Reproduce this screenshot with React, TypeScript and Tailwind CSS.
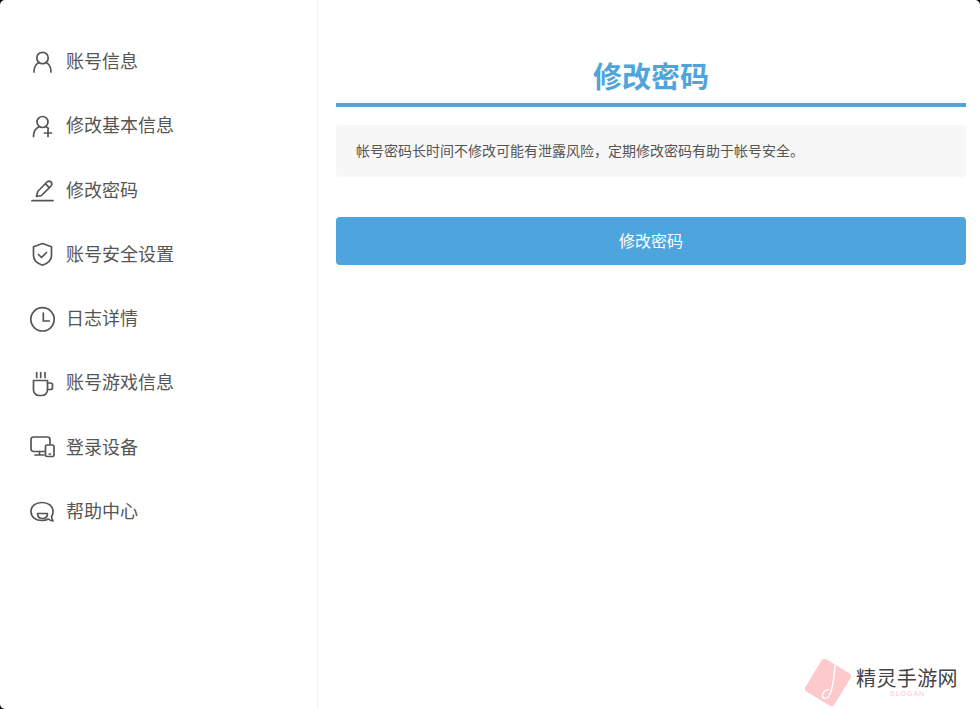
import React from "react";

function Ic({ children }: { children: React.ReactNode }) {
  return (
    <svg width="28" height="28" viewBox="0 0 28 28" fill="none" stroke="#555" strokeWidth="1.7" strokeLinecap="round" strokeLinejoin="round">
      {children}
    </svg>
  );
}

const items: [string, React.ReactNode][] = [
  ["账号信息", <Ic><circle cx="14.500" cy="11" r="5.700" /><path d="M6 25c0-5 2.500-8.500 5.200-9.500M23 25c0-5-2.500-8.500-5.200-9.500" /></Ic>],
  ["修改基本信息", <Ic><circle cx="14.500" cy="10" r="5.500" /><path d="M5.500 24.500c0-5 2.500-8.500 5.500-9.800M18 14.700c1 .4 1.800 1 2.500 1.800" /><path d="M20 17.500v7M16.500 21h7" /></Ic>],
  ["修改密码", <Ic><path d="M4 24.700h21" /><path d="M8.500 20.500l1.200-5L19 6c1-1 2.800-1 4 0s1 2.800 0 4L13.500 19.500z" /><path d="M17.500 7.800l3.800 3.800" /></Ic>],
  ["账号安全设置", <Ic><path d="M14.500 3.500l9 3.200v9c0 4.500-3.500 7.500-9 9.500-5.500-2-9-5-9-9.500v-9z" /><path d="M10.500 14.500l3 3 5-5" /></Ic>],
  ["日志详情", <Ic><circle cx="14.500" cy="14.300" r="11.700" /><path d="M15.300 8v8h6" /></Ic>],
  ["账号游戏信息", <Ic><path d="M5.500 11.500h14v9.500a5.500 5.500 0 0 1-5.500 5.500h-3a5.500 5.500 0 0 1-5.500-5.500z" /><path d="M19.500 14h3a2 2 0 0 1 2 2v2.500a2 2 0 0 1-2 2h-3" /><path d="M8.700 3.500v5M12.700 3.500v5M17 3.500v5" /></Ic>],
  ["登录设备", <Ic><path d="M17 18.500H5.500A2.500 2.500 0 0 1 3 16V6.500A2.500 2.500 0 0 1 5.500 4H19.500A2.500 2.500 0 0 1 22 6.500V11" /><path d="M7 22h9M11.500 18.500V22" /><rect x="17.500" y="12" width="8.500" height="11.500" rx="1.500" /><path d="M21.200 21h1.200" /></Ic>],
  ["帮助中心", <Ic><path d="M14 4.500c6.500 0 11 3.500 11 9 0 2-.5 3.800-1.500 5 .2 1.500.8 3 1.500 4.500-2-.2-3.500-1-4.500-2-2 1-4 1.500-6.500 1.500C7.500 22.500 3 19 3 13.500S7.500 4.500 14 4.500z" /><path d="M9.500 15.500h10c0 3.500-2 5-5 5s-5-1.500-5-5z" /></Ic>],
];

export default function App() {
  return (
    <div className="w-[980px] h-[709px] bg-black overflow-hidden">
      <div className="relative w-[980px] h-[709px] bg-white overflow-hidden flex rounded-tl-[5px] rounded-tr-[5px] rounded-bl-[5px] text-[#555] font-['Liberation_Sans','Noto_Sans_CJK_SC',sans-serif]">
        <aside className="w-[318px] shrink-0 border-r border-[#f2f2f2] pt-[29.3px]">
          {items.map(([label, icon]) => (
            <div key={label} className="h-[64.3px] flex items-center pl-[28px] gap-[10px] text-[18px]">
              {icon}
              <span className="mt-[2px]">{label}</span>
            </div>
          ))}
        </aside>
        <main className="flex-1 pl-[18px] pr-[14px]">
          <h1 className="h-[107px] pt-[56px] border-b-[4px] border-[#4ea4dd] text-center text-[29px] leading-[45px] font-bold text-[#4ea4dd]">修改密码</h1>
          <p className="mt-[18px] h-[52px] bg-[#f7f7f7] rounded-[4px] pl-[20px] text-[14px] leading-[52px] text-[#555]">帐号密码长时间不修改可能有泄露风险，定期修改密码有助于帐号安全。</p>
          <button className="mt-[40px] w-full h-[48px] bg-[#4ea4dd] rounded-[4px] text-white text-[16px] pt-[2px]">修改密码</button>
        </main>
        <div className="absolute left-[804px] top-[658px] w-[170px] h-[50px]">
          <svg className="absolute left-0 top-0" width="50" height="50" viewBox="0 0 50 50">
            <rect x="7" y="5.500" width="34" height="38" rx="4" fill="#fdc9cb" transform="rotate(31 24 24.500)" />
            <path d="M31 7c-1 10-1 22-6 31-2 4-7 3-6.500-1 .5-3 3-5 6.500-5.500" fill="none" stroke="#fff" strokeWidth="1.500" />
          </svg>
          <span className="absolute left-[52px] top-[10px] text-[20px] leading-[22px] tracking-[0.4px] text-[#444] whitespace-nowrap">精灵手游网</span>
          <span className="absolute left-[86px] top-[32px] text-[7px] leading-[8px] tracking-[1px] text-[#fbc8cb]">SLOGAN</span>
        </div>
      </div>
    </div>
  );
}
